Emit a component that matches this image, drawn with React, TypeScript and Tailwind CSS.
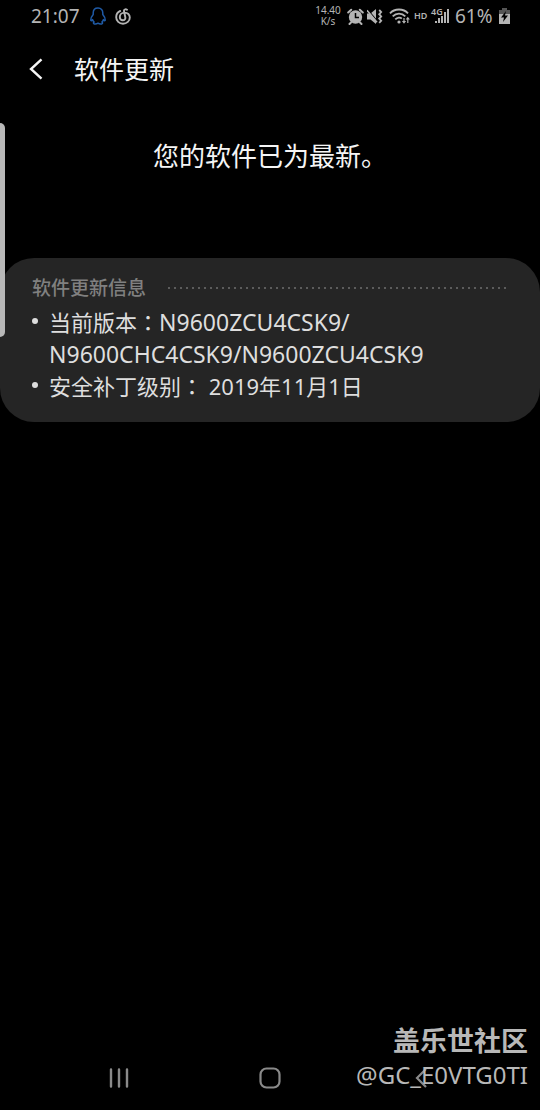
import React from 'react';

const versionInfo = [
  {
    label: '当前版本',
    lines: ['N9600ZCU4CSK9/', 'N9600CHC4CSK9/N9600ZCU4CSK9'],
    code: true,
  },
  { label: '安全补丁级别', lines: [' 2019年11月1日'], code: false },
];

function StatusBar() {
  return (
    <div className="flex h-8 items-center justify-between pl-[31px] pr-[30px] text-[#b4b4b4]">
      <div className="flex items-center">
        <span className="w-[59px] text-[19px] leading-6">21:07</span>
        {/* QQ */}
        <svg className="h-[18px] w-4" viewBox="0 0 16 18" fill="none" stroke="#1f5aa6" strokeWidth="1.5" strokeLinejoin="round">
          <path d="M8 1C4.800 1 3.200 3.300 3.200 6v1.600C2 9 .8 11 .8 13c0 1.200 1 .9 1.800-.4.3 1.100.8 1.800 1.500 2.400-.9.400-1 1.700.2 1.900 1.300.2 2.700 0 3.700-.7 1 .7 2.400.9 3.700.7 1.200-.2 1.100-1.500.2-1.900.7-.6 1.200-1.300 1.500-2.400.8 1.300 1.800 1.600 1.800.4 0-2-1.200-4-2.400-5.400V6C12.800 3.300 11.200 1 8 1z" />
        </svg>
        {/* NetEase music */}
        <svg className="ml-[9px] h-[17px] w-4" viewBox="0 0 16 17" fill="none" stroke="currentColor" strokeWidth="1.9" strokeLinecap="round">
          <path d="M5.200 3C2.700 4 1.200 6.400 1.200 9.200c0 3.800 3 6.500 6.800 6.500s6.800-2.700 6.800-6.200c0-2.800-2.100-4.900-5.200-4.900-2.900 0-4.800 2-4.800 4.400 0 1.900 1.200 3.200 3 3.200 1.900 0 2.800-1.300 2.500-2.900L9 3.300C8.700 1.500 10.500.8 12 1.800" />
        </svg>
      </div>

      <div className="flex items-center">
        <div className="w-8 text-center text-[10px] leading-[11px]">
          <div>14.40</div>
          <div>K/s</div>
        </div>
        {/* alarm */}
        <svg className="ml-[3px] h-[17px] w-[17px]" viewBox="0 0 17 17">
          <circle cx="8.500" cy="9" r="6.700" fill="currentColor" />
          <path d="M1.200 4.500 4.200 1.700M15.800 4.500 12.800 1.700M4 14.500 2.500 16M13 14.500l1.500 1.500" stroke="currentColor" strokeWidth="2" strokeLinecap="round" />
          <path d="M8.500 5v4.400H12" stroke="#000" strokeWidth="1.500" fill="none" />
        </svg>
        {/* muted, vibrating */}
        <svg className="ml-[3px] h-[17px] w-4" viewBox="0 0 16 17" fill="none">
          <path d="M0 5.500h3.500L9 1v15l-5.500-4.500H0z" fill="currentColor" />
          <path d="M.5 1.500 10.500 13.300" stroke="#000" strokeWidth="1.200" />
          <path d="M0 2.300 10 14.200" stroke="currentColor" strokeWidth="1.400" />
          <path d="m12.200 2 2 2-2 2.200 2 2.200-2 2.200 2 2.200-2 2" stroke="currentColor" strokeWidth="1.800" />
        </svg>
        {/* wifi */}
        <svg className="ml-[6px] h-[17px] w-[22px]" viewBox="0 0 22 17" fill="none" stroke="currentColor" strokeWidth="1.800">
          <path d="M1 5.300C5.500.2 14.500.2 19 5.300M3.700 8.400c3.500-3.800 9.100-3.800 12.600 0M6.300 11.400c2-2.200 5-2.400 6.500-.8" />
          <circle cx="10" cy="14" r="1.600" fill="currentColor" stroke="none" />
          <path d="M15 10v4M18.800 15v-4" strokeWidth="1.200" />
          <path d="M12.900 13h4.200L15 15.800zM16.700 11.500h4.200l-2.100-2.800z" fill="currentColor" stroke="none" />
        </svg>
        <span className="ml-[3px] w-[17px] text-[9px] font-semibold leading-4">HD</span>
        {/* signal */}
        <div className="relative h-[18px] w-[18px]">
          <span className="absolute top-0 left-0 text-[9px] font-semibold leading-[10px]">4G</span>
          <svg className="h-[18px] w-[18px]" viewBox="0 0 18 18" fill="currentColor">
            <path d="M4 14h2v2H4zM7 11h2v5H7zM10 9h2v7h-2zM13 5h2v11h-2zM16 2h2v14h-2z" />
          </svg>
        </div>
        <span className="ml-[6px] w-[44px] text-[19px] leading-6">61%</span>
        {/* battery */}
        <svg className="h-4 w-[11px]" viewBox="0 0 11 16">
          <path d="M3 0h5v2h3v4H0V2h3z" fill="#555" />
          <path d="M0 6h11v10H0z" fill="currentColor" />
          <path d="M7 3 2 9.500h3L4 14l5-6.500H6z" fill="#000" />
        </svg>
      </div>
    </div>
  );
}

function NavBar() {
  return (
    <nav className="flex h-16 items-center justify-center text-[#8a8a8a]">
      <button type="button" aria-label="最近" className="flex w-[151px] justify-center">
        <svg className="h-5 w-5" viewBox="0 0 20 20" stroke="currentColor" strokeWidth="2.400" strokeLinecap="round">
          <path d="M2 1.500v17M10 1.500v17M18 1.500v17" />
        </svg>
      </button>
      <button type="button" aria-label="主屏幕" className="flex w-[151px] justify-center">
        <svg className="h-[22px] w-[22px]" viewBox="0 0 22 22" fill="none" stroke="currentColor" strokeWidth="2.200">
          <rect x="1.500" y="1.500" width="19" height="19" rx="6" />
        </svg>
      </button>
      <button type="button" aria-label="返回" className="flex w-[151px] justify-center">
        <svg className="h-5 w-3" viewBox="0 0 12 20" fill="none" stroke="currentColor" strokeWidth="2.200">
          <path d="M11 1 2 10l9 9" />
        </svg>
      </button>
    </nav>
  );
}

export default function App() {
  return (
    <div className="relative flex min-h-screen flex-col overflow-hidden bg-black font-['Noto_Sans','Noto_Sans_CJK_SC',sans-serif]" lang="zh-CN">
      <StatusBar />

      <header className="flex h-[74px] items-center pl-[29px] text-[#f5f5f5]">
        <button type="button" aria-label="返回" className="w-[45px]">
          <svg className="h-[22px] w-[14px]" viewBox="0 0 14 22" fill="none" stroke="currentColor" strokeWidth="2.400">
            <path d="M12.500 1.300 2 11l10.500 9.700" />
          </svg>
        </button>
        <h1 className="text-[25px] leading-8">软件更新</h1>
      </header>

      <main className="flex-1">
        <p className="mt-[34px] text-center text-[26px] leading-8 text-[#f5f5f5]">您的软件已为最新。</p>

        <section className="mt-[86px] rounded-[34px] bg-[#252525] px-8 pb-5 pt-[18px]">
          <div className="flex items-center">
            <h2 className="text-[19px] font-medium leading-6 text-[#808080]">软件更新信息</h2>
            <div className="ml-5 h-1.5 flex-1 bg-[radial-gradient(circle,#5c5c5c_1px,transparent_1.5px)] bg-[length:6px_6px]" />
          </div>
          <ul className="mt-[6px] text-[22px] leading-8 text-[#dedede]">
            {versionInfo.map(item => (
              <li key={item.label} className="flex">
                <span className="mt-3 h-1.5 w-1.5 shrink-0 rounded-full bg-[#dedede]" />
                <div className="ml-[11px] whitespace-pre-wrap">
                  {item.label}
                  <span className="font-['Noto_Sans_CJK_TC',sans-serif] leading-none" lang="zh-TW">：</span>
                  <span className={item.code ? 'text-[23px]' : ''}>
                    {item.lines.map((line, i) => (
                      <React.Fragment key={line}>
                        {i > 0 && <br />}
                        {line}
                      </React.Fragment>
                    ))}
                  </span>
                </div>
              </li>
            ))}
          </ul>
        </section>
      </main>

      <NavBar />

      {/* edge panel handle */}
      <div className="absolute left-0 top-[123px] h-[214px] w-[5px] rounded-r-[5px] bg-[#b8b8b8]" />

      {/* watermark */}
      <div className="pointer-events-none absolute bottom-[19px] right-3 text-right text-[#b8b8b8]">
        <div className="text-[27px] font-bold leading-9">盖乐世社区</div>
        <div className="text-[24px] leading-8">@GC_E0VTG0TI</div>
      </div>
    </div>
  );
}
